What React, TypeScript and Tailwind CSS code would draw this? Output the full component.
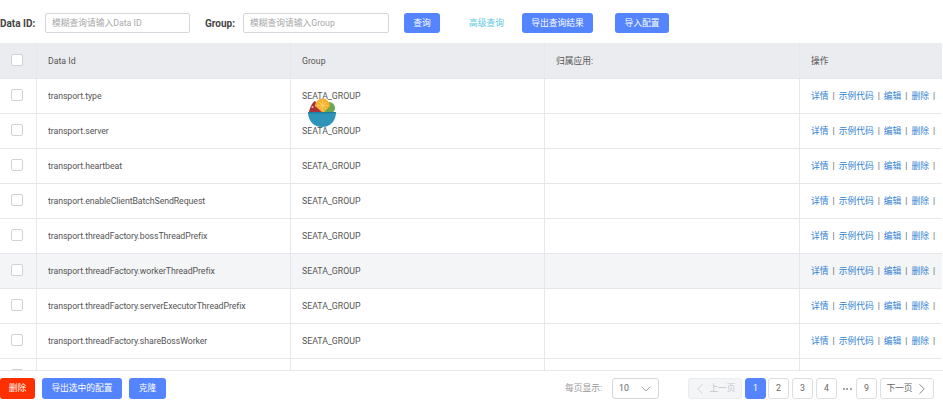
import { ChevronDown, ChevronLeft, ChevronRight } from "lucide-react";

const rows = [
  "transport.type",
  "transport.server",
  "transport.heartbeat",
  "transport.enableClientBatchSendRequest",
  "transport.threadFactory.bossThreadPrefix",
  "transport.threadFactory.workerThreadPrefix",
  "transport.threadFactory.serverExecutorThreadPrefix",
  "transport.threadFactory.shareBossWorker",
  "",
];

const gridCols = "grid grid-cols-[37px_254px_254px_255px_1fr]";
const cellClass = "flex items-center border-r border-[#e6e7eb] pl-[11px] pt-[2px] last:border-r-0";
const primaryBtn = "h-[21px] rounded-[3px] bg-[#5584ff] pt-[1px] text-white flex items-center justify-center";
const pageBtn = "h-[21px] w-[21px] rounded-[3px] border border-[#dcdee3] bg-white pt-[1px] text-[#666] flex items-center justify-center";

const Checkbox = () => (
  <span className="mb-[4px] block h-3 w-3 rounded-[2px] border border-[#d0d2d8] bg-white" />
);

const Actions = () => (
  <div className="flex items-center whitespace-nowrap text-[#2f7fd1]">
    <span>详情</span>
    <span className="mx-[4px] text-[#666]">|</span>
    <span>示例代码</span>
    <span className="mx-[4px] text-[#666]">|</span>
    <span>编辑</span>
    <span className="mx-[4px] text-[#666]">|</span>
    <span>删除</span>
    <span className="mx-[4px] text-[#666]">|</span>
  </div>
);

const BowlLogo = () => (
  <svg
    viewBox="0 0 28 29"
    className="absolute left-[308px] top-[98px] h-[29px] w-[28px]"
  >
    <circle cx="21" cy="10" r="6" fill="#6aa84f" />
    <path d="M1 14 C2 8 5 4 7 3 L15 14 Z" fill="#a8323a" />
    <circle cx="4.5" cy="9" r="1" fill="#e8c0b0" />
    <circle cx="8" cy="7.5" r="1" fill="#e8c0b0" />
    <path d="M7 8 A7.5 7.5 0 0 1 22 8 L15 15 Z" fill="#f6b12d" />
    <path d="M14.5 2 V13 M9 7.5 H20 M11 4 L18 11 M18 4 L11 11" stroke="#f9d27a" strokeWidth="0.7" />
    <path d="M0 14 H28 C28 23 22 29 14 29 C6 29 0 23 0 14 Z" fill="#2e95b8" />
    <path d="M0 14 H28 L27.5 15.5 H0.5 Z" fill="#1f7f9f" />
  </svg>
);

export default function App() {
  return (
    <div
      className="relative flex h-[406px] w-[943px] flex-col overflow-hidden bg-white text-[8.75px] text-[#333]"
      style={{ fontFamily: "Roboto, 'Noto Sans CJK SC', sans-serif" }}
    >
      {/* search bar */}
      <div className="flex h-[43px] items-start pt-[13px]">
        <span className="flex h-[20px] w-[45px] items-center pt-[1px] text-[10px] font-bold text-[#444]">Data ID:</span>
        <div className="flex h-[20px] w-[145px] items-center rounded-[2px] border border-[#d5d7dd] pl-[6px] pt-[1px] text-[#a8a8a8]">
          模糊查询请输入Data ID
        </div>
        <span className="ml-[15px] flex h-[20px] w-[38px] items-center pt-[1px] text-[10px] font-bold text-[#444]">Group:</span>
        <div className="flex h-[20px] w-[146px] items-center rounded-[2px] border border-[#d5d7dd] pl-[6px] pt-[1px] text-[#a8a8a8]">
          模糊查询请输入Group
        </div>
        <button className={`${primaryBtn} ml-[15px] w-[36px] !h-[20px]`}>查询</button>
        <span className="ml-[29px] flex h-[20px] w-[35px] items-center whitespace-nowrap pt-[1px] text-[#5bc8e0]">高级查询</span>
        <button className={`${primaryBtn} ml-[18px] w-[71px] !h-[20px]`}>导出查询结果</button>
        <button className={`${primaryBtn} ml-[22px] w-[54px] !h-[20px]`}>导入配置</button>
      </div>

      {/* table */}
      <div className="min-h-0 flex-1 overflow-hidden pr-px">
        <div className={`${gridCols} h-[36px] border-b border-[#e6e7eb] bg-[#ebecf0] text-[#555]`}>
          <div className={cellClass}><Checkbox /></div>
          <div className={cellClass}>Data Id</div>
          <div className={cellClass}>Group</div>
          <div className={cellClass}>归属应用:</div>
          <div className={cellClass}>操作</div>
        </div>
        {rows.map((row, i) => (
          <div
            key={i}
            className={`${gridCols} h-[35px] border-b border-[#e6e7eb] text-[#555] ${i === 5 ? "bg-[#f4f5f7]" : "bg-white"}`}
          >
            <div className={cellClass}><Checkbox /></div>
            <div className={`${cellClass} tracking-[-0.08px]`}>{row}</div>
            <div className={cellClass}>{row ? "SEATA_GROUP" : ""}</div>
            <div className={cellClass}></div>
            <div className={cellClass}>{row ? <Actions /> : null}</div>
          </div>
        ))}
      </div>

      {/* footer */}
      <div className="flex h-[36px] items-start border-t border-[#e6e7eb] bg-white pt-[7px]">
        <button className={`${primaryBtn} w-[35px] !bg-[#ff3000]`}>删除</button>
        <button className={`${primaryBtn} ml-[7px] w-[80px]`}>导出选中的配置</button>
        <button className={`${primaryBtn} ml-[7px] w-[37px]`}>克隆</button>
        <span className="ml-[399px] flex h-[21px] w-[39px] items-center whitespace-nowrap pt-[1px] text-[#999]">每页显示:</span>
        <div className="ml-[8px] flex h-[21px] w-[47px] items-center justify-between rounded-[3px] border border-[#d5d7dd] pl-[6px] pr-[4px] pt-[1px] text-[#666]">
          10
          <ChevronDown size={16} strokeWidth={1} className="text-[#777]" />
        </div>
        <div className={`${pageBtn} ml-[29px] !w-[54px] !border-[#ebecf0] !bg-[#f4f5f7] !text-[#c4c6cf]`}>
          <ChevronLeft size={18} strokeWidth={1} className="-ml-[3px]" />
          上一页
        </div>
        <div className={`${pageBtn} ml-[3px] !border-[#5584ff] !bg-[#5584ff] !text-white`}>1</div>
        <div className={`${pageBtn} ml-[2px]`}>2</div>
        <div className={`${pageBtn} ml-[3px]`}>3</div>
        <div className={`${pageBtn} ml-[3px]`}>4</div>
        <div className="ml-[5px] flex h-[21px] w-[10px] items-center justify-center gap-[1.5px]">
          <span className="block h-[2px] w-[2px] rounded-full bg-[#888]" />
          <span className="block h-[2px] w-[2px] rounded-full bg-[#888]" />
          <span className="block h-[2px] w-[2px] rounded-full bg-[#888]" />
        </div>
        <div className={`${pageBtn} ml-[4px]`}>9</div>
        <div className={`${pageBtn} ml-[3px] !w-[54px]`}>
          下一页
          <ChevronRight size={18} strokeWidth={1} className="-mr-[3px]" />
        </div>
      </div>

      <BowlLogo />
    </div>
  );
}
